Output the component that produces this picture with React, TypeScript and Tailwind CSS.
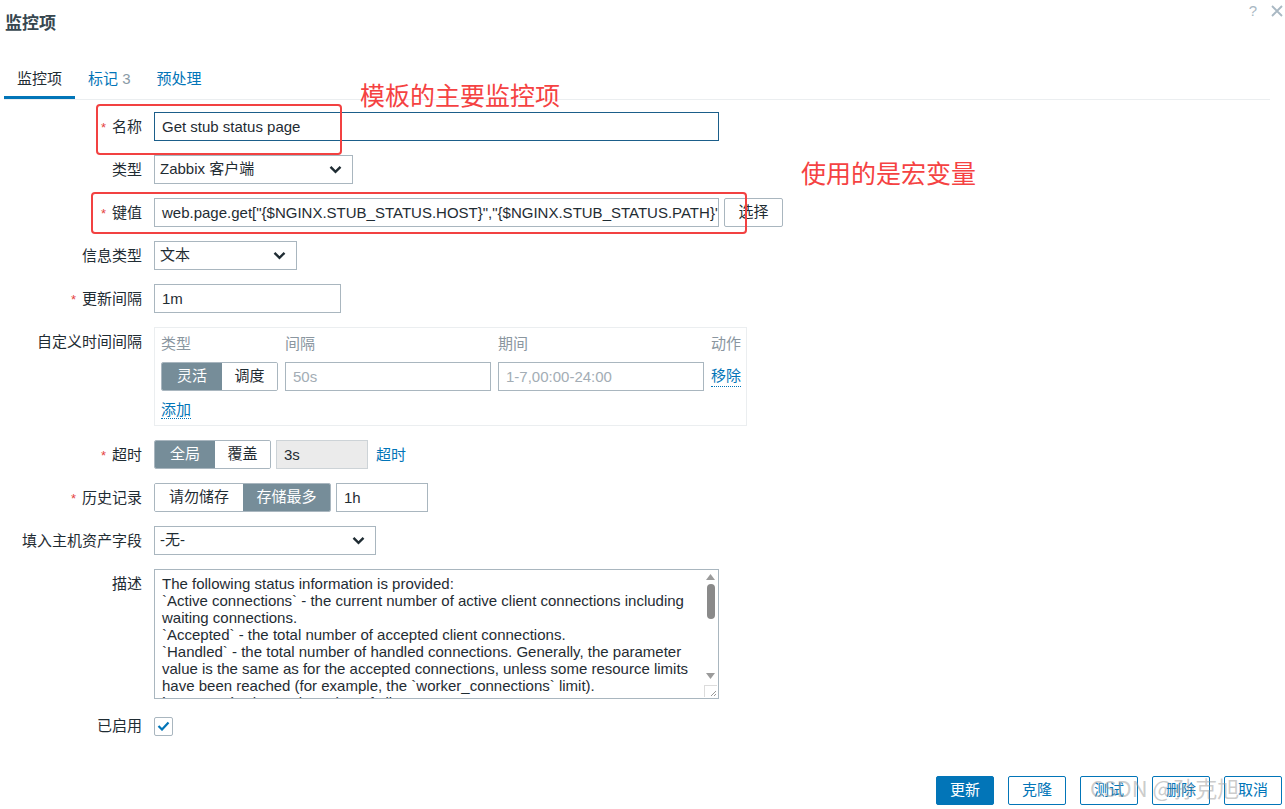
import React from 'react';

const FONT = "font-['Liberation_Sans','Noto_Sans_CJK_SC',sans-serif]";

const Chevron: React.FC = () => (
  <svg width="13" height="9" viewBox="0 0 13 9" className="shrink-0">
    <path d="M1.5 1.8 L6.5 6.8 L11.5 1.8" fill="none" stroke="#1f2c33" strokeWidth="2.4" />
  </svg>
);

interface RowProps {
  label: string;
  required?: boolean;
  children: React.ReactNode;
  className?: string;
}

const Row: React.FC<RowProps> = ({ label, required, children, className = '' }) => (
  <div className={`flex items-start ${className}`}>
    <div className="w-[142px] h-[29px] shrink-0 text-right leading-[29px] text-[#1f2c33]">
      {required && <span className="text-[#e54444] text-[13px] leading-none mr-[6px]">*</span>}
      {label}
    </div>
    <div className="ml-[12px] flex items-start">{children}</div>
  </div>
);

const Field: React.FC<{ w: string; children?: React.ReactNode; className?: string; border?: string }> = ({
  w,
  children,
  className = '',
  border = 'border-[#a9b6bf]',
}) => (
  <div className={`${w} h-[29px] border ${border} px-[7px] leading-[27px] whitespace-nowrap overflow-hidden ${className}`}>
    {children}
  </div>
);

const Select: React.FC<{ w: string; value: string }> = ({ w, value }) => (
  <div className={`${w} h-[29px] border border-[#a9b6bf] pl-[5px] pr-[10px] flex items-center justify-between`}>
    <span>{value}</span>
    <Chevron />
  </div>
);

const Toggle: React.FC<{ items: [string, string][]; active: number }> = ({ items, active }) => (
  <div className="flex h-[29px] border border-[#a9b6bf] rounded-[2px] overflow-hidden">
    {items.map(([t, w], i) => (
      <div
        key={t}
        className={`${w} flex items-center justify-center ${i === active ? 'bg-[#768d99] text-white' : 'bg-white text-[#1f2c33]'}`}
      >
        {t}
      </div>
    ))}
  </div>
);

const DESC = [
  'The following status information is provided:',
  '`Active connections` - the current number of active client connections including',
  'waiting connections.',
  '`Accepted` - the total number of accepted client connections.',
  '`Handled` - the total number of handled connections. Generally, the parameter',
  'value is the same as for the accepted connections, unless some resource limits',
  'have been reached (for example, the `worker_connections` limit).',
  '`Requests` - the total number of client requests.',
];

const FooterBtn: React.FC<{ label: string; primary?: boolean }> = ({ label, primary }) => (
  <button
    className={`w-[58px] h-[29px] rounded-[2px] border border-[#0275b8] ${primary ? 'bg-[#0275b8] text-white' : 'bg-white text-[#0275b8]'}`}
  >
    {label}
  </button>
);

export default function App() {
  return (
    <div className={`relative w-[1285px] h-[809px] bg-white overflow-hidden flex flex-col text-[15px] text-[#1f2c33] ${FONT}`}>
      {/* header */}
      <div className="flex items-start justify-between">
        <div className="pl-[5px] pt-[14px] text-[17px] font-bold leading-[20px] text-[#37474f]">监控项</div>
        <div className="flex items-center gap-[14px] pt-[3px] pr-[2px] text-[#a9b8c3]">
          <span className="text-[15px] leading-[16px]">?</span>
          <svg width="12" height="12" viewBox="0 0 12 12">
            <path d="M1 1 L11 11 M11 1 L1 11" stroke="#a9b8c3" strokeWidth="1.8" />
          </svg>
        </div>
      </div>

      {/* tabs */}
      <div className="mt-[33px] ml-[4px] mr-[15px] flex border-b border-[#ebeef0]">
        <div className="px-[13px] pt-[2px] pb-[7px] leading-[20px] border-b-[3px] border-[#0275b8] text-[#1f2c33]">监控项</div>
        <div className="px-[13px] pt-[2px] pb-[7px] leading-[20px] border-b-[3px] border-transparent text-[#0275b8]">
          标记 <span className="text-[#8a9aa6]">3</span>
        </div>
        <div className="px-[13px] pt-[2px] pb-[7px] leading-[20px] border-b-[3px] border-transparent text-[#0275b8]">预处理</div>
      </div>

      {/* form */}
      <div className="mt-[12px] flex flex-col gap-[14px]">
        <Row label="名称" required>
          <Field w="w-[565px]" border="border-[#1b5e8a]">Get stub status page</Field>
        </Row>
        <Row label="类型">
          <Select w="w-[199px]" value="Zabbix 客户端" />
        </Row>
        <Row label="键值" required>
          <Field w="w-[565px]">web.page.get["{'{'}$NGINX.STUB_STATUS.HOST{'}'}","{'{'}$NGINX.STUB_STATUS.PATH{'}'}","{'{'}$NGINX.STUB_STATUS.PORT{'}'}"]</Field>
          <button className="ml-[5px] w-[59px] h-[29px] border border-[#a9b6bf] rounded-[2px] bg-white">选择</button>
        </Row>
        <Row label="信息类型">
          <Select w="w-[143px]" value="文本" />
        </Row>
        <Row label="更新间隔" required>
          <Field w="w-[187px]">1m</Field>
        </Row>
        <Row label="自定义时间间隔">
          <div className="w-[593px] h-[99px] border border-[#ebeef0] pl-[6px] pr-[5px] pt-[6px]">
            <div className="grid grid-cols-[117px_206px_206px_auto] gap-x-[7px] text-[#8a969f] leading-[20px]">
              <div>类型</div>
              <div>间隔</div>
              <div>期间</div>
              <div className="text-right">动作</div>
            </div>
            <div className="mt-[8px] grid grid-cols-[117px_206px_206px_auto] gap-x-[7px] items-center">
              <Toggle items={[['灵活', 'w-[60px]'], ['调度', 'flex-1']]} active={0} />
              <Field w="w-[206px]" className="text-[#a3adb5]">50s</Field>
              <Field w="w-[206px]" className="text-[#a3adb5]">1-7,00:00-24:00</Field>
              <span className="justify-self-end text-[#0275b8] leading-[20px] border-b border-dotted border-[#0275b8]">移除</span>
            </div>
            <div className="mt-[8px]">
              <span className="text-[#0275b8] leading-[20px] border-b border-dotted border-[#0275b8]">添加</span>
            </div>
          </div>
        </Row>
        <Row label="超时" required>
          <div className="w-[117px]">
            <Toggle items={[['全局', 'w-[60px]'], ['覆盖', 'flex-1']]} active={0} />
          </div>
          <Field w="w-[92px] ml-[5px]" border="border-[#cdd3d7]" className="bg-[#ebebeb]">3s</Field>
          <span className="ml-[8px] leading-[29px] text-[#0275b8]">超时</span>
        </Row>
        <Row label="历史记录" required>
          <div className="w-[177px]">
            <Toggle items={[['请勿储存', 'w-[88px]'], ['存储最多', 'flex-1']]} active={1} />
          </div>
          <Field w="w-[92px] ml-[5px]">1h</Field>
        </Row>
        <Row label="填入主机资产字段">
          <Select w="w-[222px]" value="-无-" />
        </Row>
        <Row label="描述">
          <div className="w-[565px] h-[130px] border border-[#a9b6bf] flex overflow-hidden">
            <div className="flex-1 pl-[7px] pt-[5px] leading-[17px] whitespace-pre overflow-hidden">
              {DESC.join('\n')}
            </div>
            <div className="w-[15px] flex flex-col items-center pt-[4px] pb-[1px]">
              <svg width="9" height="6" viewBox="0 0 9 6"><path d="M0 6 L4.5 0 L9 6 Z" fill="#9b9b9b" /></svg>
              <div className="mt-[4px] w-[8px] h-[35px] rounded-full bg-[#8a8a8a]" />
              <div className="flex-1" />
              <svg width="9" height="6" viewBox="0 0 9 6"><path d="M0 0 L4.5 6 L9 0 Z" fill="#9b9b9b" /></svg>
              <div className="mt-[6px] w-[13px] h-[12px] border-t border-l border-[#dcdcdc] flex items-end justify-end">
                <svg width="8" height="8" viewBox="0 0 8 8"><path d="M7 2 L2 7 M7 5 L5 7" stroke="#999" strokeWidth="1" /></svg>
              </div>
            </div>
          </div>
        </Row>
        <div className="mt-[2px] flex items-center">
          <div className="w-[142px] text-right text-[#1f2c33]">已启用</div>
          <div className="ml-[12px] w-[19px] h-[19px] border border-[#a9b6bf] rounded-[2px] flex items-center justify-center">
            <svg width="13" height="10" viewBox="0 0 13 10">
              <path d="M1.5 5 L5 8.5 L11.5 1.5" fill="none" stroke="#0275b8" strokeWidth="2.2" />
            </svg>
          </div>
        </div>
      </div>

      {/* footer */}
      <div className="mt-auto pb-[4px] pr-[3px] flex justify-end gap-[14px]">
        <FooterBtn label="更新" primary />
        <FooterBtn label="克隆" />
        <FooterBtn label="测试" />
        <FooterBtn label="删除" />
        <FooterBtn label="取消" />
      </div>

      {/* annotations */}
      <div className="absolute left-[96px] top-[104px] w-[246px] h-[51px] border-2 border-[#f24141] rounded-[4px]" />
      <div className="absolute left-[91px] top-[192px] w-[656px] h-[42px] border-2 border-[#f24141] rounded-[4px]" />
      <div className="absolute left-[360px] top-[79px] text-[25px] leading-[30px] text-[#f54242] font-['Noto_Sans_CJK_SC',sans-serif]">模板的主要监控项</div>
      <div className="absolute left-[801px] top-[157px] text-[25px] leading-[30px] text-[#f54242] font-['Noto_Sans_CJK_SC',sans-serif]">使用的是宏变量</div>
      <div className="absolute left-[1090px] top-[773px] text-[22px] leading-[28px] text-[#9a9a9a]/50 font-['Noto_Sans_CJK_SC',sans-serif]">CSDN @孙克旭</div>
    </div>
  );
}
